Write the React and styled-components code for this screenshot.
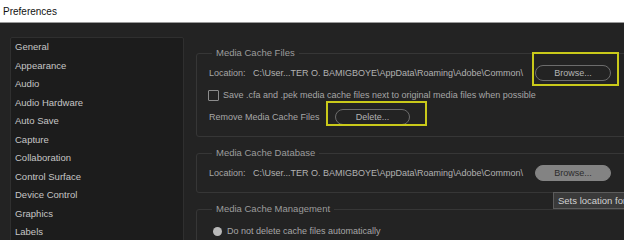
import React from 'react';
import styled, { createGlobalStyle } from 'styled-components';

const GlobalStyle = createGlobalStyle`
  html, body {
    margin: 0;
    overflow: hidden;
    background: #232323;
  }
  body {
    font-family: 'Liberation Sans', Arial, sans-serif;
  }
`;

const Window = styled.div`
  width: 624px;
  height: 240px;
  overflow: hidden;
  background: #232323;
`;

const TitleBar = styled.div`
  height: 22px;
  padding-left: 3px;
  display: flex;
  align-items: center;
  background: #ffffff;
  border-bottom: 1px solid #9a9a9a;
  color: #111;
  font-size: 10px;
`;

const Body = styled.div`
  display: flex;
  gap: 12px;
  padding: 14px 0 0 10px;
`;

const Sidebar = styled.ul`
  flex: none;
  box-sizing: border-box;
  width: 174px;
  height: 220px;
  margin: 0;
  padding: 0 0 0 4px;
  list-style: none;
  background: #1c1c1c;
  border: 1px solid #2f2f2f;
  border-radius: 2px;
`;

const SideItem = styled.li`
  height: 18.5px;
  line-height: 18.5px;
  color: #c6c6c6;
  font-size: 9.5px;
`;

const Content = styled.div`
  flex: none;
  width: 436px;
  padding-top: 10px;
  display: flex;
  flex-direction: column;
  gap: 10px;
`;

const Group = styled.fieldset`
  margin: 0;
  padding: ${p => p.$top || 3}px 20px 8px 12px;
  border: 1px solid #363636;
  border-radius: 3px;
  min-width: 0;
`;

const Legend = styled.legend`
  margin-left: 3px;
  padding: 0 4px;
  line-height: 12px;
  color: #9c9c9c;
  font-size: 9.5px;
`;

const Row = styled.div`
  height: 22px;
  display: flex;
  align-items: center;
  font-size: 9px;
  color: #a6a6a6;
`;

const Label = styled.span`
  flex: none;
  width: ${p => p.$w}px;
  white-space: nowrap;
`;

const Path = styled.span`
  flex: 1;
  color: #b2b2b2;
  white-space: nowrap;
`;

const Anchor = styled.div`
  position: relative;
  flex: none;
`;

const PillButton = styled.button`
  display: block;
  width: ${p => p.$w || 76}px;
  height: 16px;
  padding: 0;
  border-radius: 8px;
  border: 1px solid ${p => (p.$hover ? '#838383' : '#6c6c6c')};
  background: ${p => (p.$hover ? '#838383' : 'transparent')};
  color: ${p => (p.$hover ? '#2c2c2c' : '#b4b4b4')};
  font-family: inherit;
  font-size: 9px;
`;

const Highlight = styled.div`
  position: absolute;
  top: ${p => p.$t}px;
  left: ${p => p.$l}px;
  right: ${p => p.$r}px;
  bottom: ${p => p.$b}px;
  border: 2px solid #c9c91a;
  pointer-events: none;
`;

const Tooltip = styled.div`
  position: absolute;
  top: 27px;
  left: 18px;
  padding: 1px 4px;
  height: 13px;
  line-height: 13px;
  background: #3a3a3a;
  border: 1px solid #5c5c5c;
  color: #d2d2d2;
  font-size: 9.5px;
  white-space: nowrap;
  z-index: 2;
`;

const Check = styled.span`
  flex: none;
  width: 9px;
  height: 9px;
  margin: 0 4px 0 -1px;
  border: 1px solid #8c8c8c;
  border-radius: 1px;
`;

const Radio = styled.span`
  flex: none;
  width: 9px;
  height: 9px;
  margin: 0 5px 0 4px;
  border-radius: 50%;
  background: #b9b9b9;
`;

const sections = [
  'General', 'Appearance', 'Audio', 'Audio Hardware', 'Auto Save', 'Capture',
  'Collaboration', 'Control Surface', 'Device Control', 'Graphics', 'Labels',
];

const cachePath = 'C:\\User...TER O. BAMIGBOYE\\AppData\\Roaming\\Adobe\\Common\\';

const App = () => (
  <Window>
    <GlobalStyle />
    <TitleBar>Preferences</TitleBar>
    <Body>
      <Sidebar>
        {sections.map(s => <SideItem key={s}>{s}</SideItem>)}
      </Sidebar>
      <Content>
        <Group>
          <Legend>Media Cache Files</Legend>
          <Row>
            <Label $w={44}>Location:</Label>
            <Path>{cachePath}</Path>
            <Anchor>
              <PillButton>Browse...</PillButton>
              <Highlight $t={-13} $l={-3} $r={-8} $b={-5} />
            </Anchor>
          </Row>
          <Row>
            <Check />
            <span>Save .cfa and .pek media cache files next to original media files when possible</span>
          </Row>
          <Row>
            <Label $w={126}>Remove Media Cache Files</Label>
            <Anchor>
              <PillButton $w={75}>Delete...</PillButton>
              <Highlight $t={-8} $l={-9} $r={-17} $b={-1} />
            </Anchor>
          </Row>
        </Group>
        <Group>
          <Legend>Media Cache Database</Legend>
          <Row>
            <Label $w={44}>Location:</Label>
            <Path>{cachePath}</Path>
            <Anchor>
              <PillButton $hover>Browse...</PillButton>
              <Tooltip>Sets location for media cache files</Tooltip>
            </Anchor>
          </Row>
        </Group>
        <Group $top={5}>
          <Legend>Media Cache Management</Legend>
          <Row>
            <Radio />
            <span>Do not delete cache files automatically</span>
          </Row>
        </Group>
      </Content>
    </Body>
  </Window>
);

export default App;
